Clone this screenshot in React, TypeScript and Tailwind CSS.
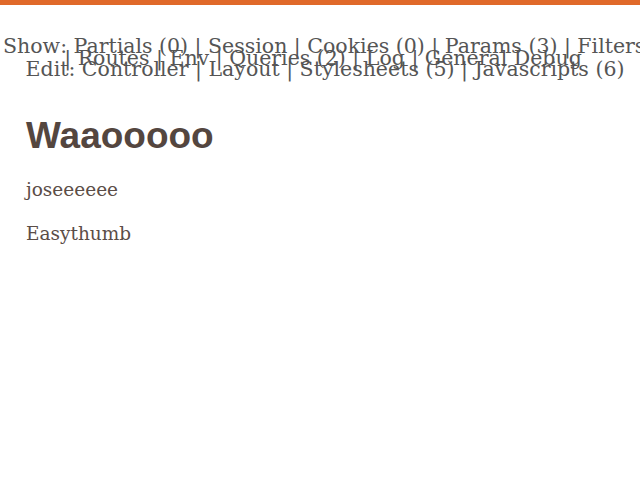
const App = () => {
  return (
    <div className="min-h-[480px] bg-white">
      <div className="h-[5px] bg-[#e0692a]" />
      <div
        className="mt-[36px] flex flex-col items-center pl-[10px] text-[20.5px] leading-[11.5px] text-[#555555]"
        style={{ fontFamily: '"DejaVu Serif", serif' }}
      >
        <div className="-ml-[7px] self-start whitespace-nowrap">
          Show: Partials (0) | Session | Cookies (0) | Params (3) | Filters
        </div>
        <div className="mr-[4px] whitespace-nowrap">| Routes | Env | Queries (2) | Log | General Debug</div>
        <div className="whitespace-nowrap">Edit: Controller | Layout | Stylesheets (5) | Javascripts (6)</div>
      </div>
      <div className="px-[26px] pt-[40px]">
        <h1
          className="text-[37px] font-bold leading-[40px] text-[#54463f]"
          style={{ fontFamily: '"Liberation Sans", Arial, sans-serif' }}
        >
          Waaooooo
        </h1>
        <div
          className="mt-[21px] flex flex-col gap-[18px] text-[18.5px] leading-[26px] text-[#5b4d47]"
          style={{ fontFamily: '"DejaVu Serif", serif' }}
        >
          <p>joseeeeee</p>
          <p>Easythumb</p>
        </div>
      </div>
    </div>
  );
};

export default App;
